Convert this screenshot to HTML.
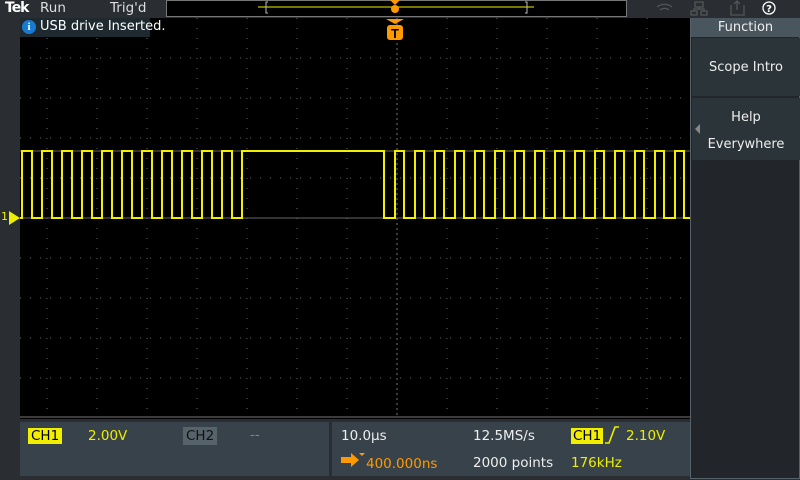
<!DOCTYPE html><html><head><style>
body{margin:0;width:800px;height:480px;background:#2a2e33;position:relative;overflow:hidden;font-family:"DejaVu Sans","Liberation Sans",sans-serif;}
.a{position:absolute;}
.t{position:absolute;white-space:nowrap;font-size:13.5px;}
</style></head><body>
<div class="a" style="left:0;top:0;width:800px;height:18px;background:#2a2e33"></div>
<div class="t" style="left:5px;top:0;color:#fff;font-weight:bold;font-size:14px;letter-spacing:-1px">Tek</div>
<div class="t" style="left:40px;top:0;color:#ddd">Run</div>
<div class="t" style="left:110px;top:0;color:#ddd">Trig'd</div>
<div class="a" style="left:166px;top:0;width:459px;height:15px;background:#000;border:1px solid #777"></div>
<svg class="a" style="left:20px;top:18px" width="670" height="401">
<rect width="670" height="401" fill="#000"/>
<g stroke="#666" stroke-dasharray="1 9" stroke-width="1">
<path d="M0 40h670M0 80h670M0 120h670M0 160h670M0 240h670M0 280h670M0 320h670M0 360h670"/>
<path d="M27 0v400M77 0v400M127 0v400M177 0v400M227 0v400M277 0v400M327 0v400M427 0v400M477 0v400M527 0v400M577 0v400M627 0v400"/>
</g>
<path d="M0 200h670" stroke="#666"/>
<path d="M377 0v400" stroke="#777" stroke-dasharray="2 3"/>
<path d="M0 399h670" stroke="#777"/>
<path d="M0 133H670" stroke="#665" stroke-width="2" opacity="0.5"/>
<path d="M0 200H2V133H12V200H22V133H32V200H42V133H52V200H62V133H72V200H82V133H92V200H102V133H112V200H122V133H132V200H142V133H152V200H162V133H172V200H182V133H192V200H202V133H212V200H222V133H364V200H375V133H384V200H395V133H404V200H415V133H424V200H435V133H444V200H455V133H464V200H475V133H484V200H495V133H504V200H515V133H524V200H535V133H544V200H555V133H564V200H575V133H584V200H595V133H604V200H615V133H624V200H635V133H644V200H655V133H664V200H670" stroke="#f2ee00" stroke-width="2" fill="none"/>
</svg>
<svg class="a" style="left:0;top:0" width="800" height="42">
<line x1="258" y1="7" x2="534" y2="7" stroke="#ee0" stroke-width="1"/>
<path d="M268 2h-2v11h2M525 2h2v11h-2" stroke="#bbb" fill="none"/>
<path d="M390 0h10l-5 5z" fill="#f90"/><circle cx="395" cy="9" r="4" fill="#f90"/>
<path d="M386 19h18l-9 5z" fill="#f90"/><rect x="387" y="25" width="16" height="15" rx="3" fill="#f90"/>
<text x="395" y="38" text-anchor="middle" font-size="13" font-weight="bold" fill="#000" font-family="Liberation Sans">T</text>
<g stroke="#555" fill="none" stroke-width="1.3"><path d="M657 7a12 12 0 0 1 15 0M660 10a7 7 0 0 1 9 0"/><path d="M695 2h8v5h-8zM691 11h6v4h-6zM701 11h6v4h-6zM699 7v2h-5v2M699 9h5v2"/><path d="M731 5v10h13v-10M737 10v-9M734 4l3-3 3 3"/></g>
<circle cx="769" cy="8" r="6" stroke="#fff" fill="none" stroke-width="1.3"/><text x="769" y="12" text-anchor="middle" font-size="10" fill="#fff" font-weight="bold">?</text>
</svg>
<div class="a" style="left:20px;top:18px;width:130px;height:19px;background:#1e2a30"></div>
<div class="a" style="left:22px;top:20px;width:14px;height:14px;border-radius:50%;background:#1a7ad0;color:#fff;font:bold 11px 'Liberation Serif';text-align:center;line-height:14px">i</div>
<div class="t" style="left:40px;top:19px;color:#fff;font-size:13px">USB drive Inserted.</div>
<div class="t" style="left:1px;top:210px;color:#ee0;font-size:11px">1</div>
<svg class="a" style="left:9px;top:211px" width="12" height="14"><path d="M0 0L11 7L0 14z" fill="#ee0"/></svg>
<div class="a" style="left:690px;top:18px;width:108px;height:460px;background:#22262b;border-left:1px solid #56616a;border-right:1px solid #56616a;border-bottom:1px solid #56616a"></div>
<div class="a" style="left:691px;top:18px;width:109px;height:19px;background:#4a565e;color:#eee;font-size:13px;text-align:center;line-height:19px">Function</div>
<div class="a" style="left:692px;top:38px;width:108px;height:58px;background:#2b3438;color:#eee;font-size:13px;text-align:center;line-height:60px">Scope Intro</div>
<div class="a" style="left:692px;top:98px;width:108px;height:62px;background:#2b3438;color:#eee;font-size:13px;text-align:center;line-height:27px;padding-top:6px;box-sizing:border-box">Help<br>Everywhere</div>
<svg class="a" style="left:695px;top:124px" width="6" height="10"><path d="M5 0L0 5L5 10z" fill="#888"/></svg>
<div class="a" style="left:20px;top:422px;width:309px;height:54px;background:#37424a"></div>
<div class="a" style="left:332px;top:422px;width:358px;height:54px;background:#37424a"></div>
<div class="t" style="left:28px;top:428px;background:#f2ee00;color:#000;padding:0 3px">CH1</div>
<div class="t" style="left:88px;top:428px;color:#ee0">2.00V</div>
<div class="t" style="left:183px;top:427px;background:#57636b;color:#111;padding:1px 3px">CH2</div>
<div class="t" style="left:250px;top:427px;color:#888">--</div>
<div class="t" style="left:341px;top:428px;color:#eee">10.0µs</div>
<div class="t" style="left:473px;top:428px;color:#eee">12.5MS/s</div>
<div class="t" style="left:571px;top:428px;background:#f2ee00;color:#000;padding:0 2px">CH1</div>
<svg class="a" style="left:604px;top:425px" width="16" height="20"><path d="M1 18h4l6-16h4" stroke="#ee0" stroke-width="1.6" fill="none"/></svg>
<div class="t" style="left:626px;top:428px;color:#ee0">2.10V</div>
<svg class="a" style="left:340px;top:452px" width="26" height="16"><path d="M1 5h10v-4l8 7-8 7v-4h-10z" fill="#f90"/><path d="M19 1h6l-3 3z" fill="#f90"/></svg>
<div class="t" style="left:366px;top:456px;color:#f90">400.000ns</div>
<div class="t" style="left:473px;top:455px;color:#eee">2000 points</div>
<div class="t" style="left:571px;top:455px;color:#ee0">176kHz</div>
</body></html>
